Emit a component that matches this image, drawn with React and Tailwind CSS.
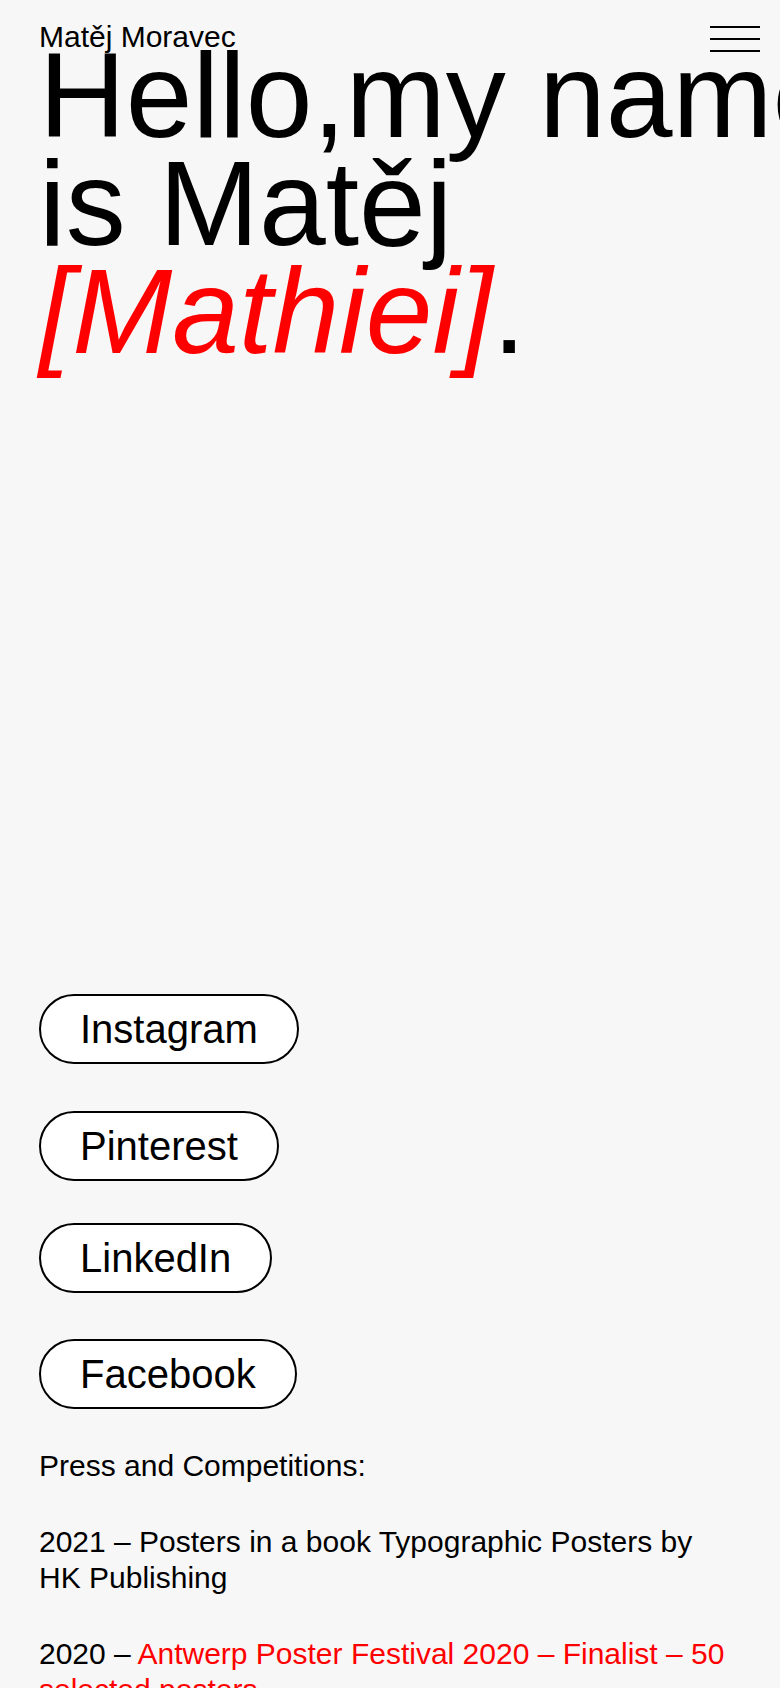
import React from 'react';

const links = [
  { label: 'Instagram', gap: 'mt-0' },
  { label: 'Pinterest', gap: 'mt-[47px]' },
  { label: 'LinkedIn', gap: 'mt-[42px]' },
  { label: 'Facebook', gap: 'mt-[46px]' },
];

const Header = () => (
  <header className="absolute top-0 left-0 right-0 z-10 flex justify-between items-start pl-[39px] pr-[20px] pt-[19px]">
    <a href="#" className="text-[30px] leading-[36px] text-black">
      Matěj Moravec
    </a>
    <button aria-label="Menu" className="mt-[7px] flex flex-col gap-[10px]">
      <span className="block w-[50px] h-[2px] bg-black" />
      <span className="block w-[50px] h-[2px] bg-black" />
      <span className="block w-[50px] h-[2px] bg-black" />
    </button>
  </header>
);

export default function App() {
  return (
    <div className="relative min-h-screen overflow-hidden bg-[#f7f7f7] text-black font-['Liberation_Sans',Arial,sans-serif]">
      <Header />

      <main className="px-[39px] pt-[41px] pb-[80px]">
        {/* Intro */}
        <h1 className="whitespace-nowrap text-[120px] leading-[108px] font-normal">
          Hello,my name
          <br />
          is Matěj
          <br />
          <span className="italic text-[#ff0000]">[Mathiei]</span>.
        </h1>

        {/* Socials */}
        <div className="mt-[629px] flex flex-col items-start">
          {links.map((link) => (
            <a
              key={link.label}
              href="#"
              className={`${link.gap} inline-flex h-[70px] items-center rounded-full border-2 border-black bg-white px-[39px] text-[40px] leading-none`}
            >
              {link.label}
            </a>
          ))}
        </div>

        {/* Press */}
        <div className="mt-[39px] flex flex-col gap-[40px] text-[30px] leading-[36px]">
          <p>Press and Competitions:</p>
          <p>2021 – Posters in a book Typographic Posters by HK Publishing</p>
          <p>
            2020 –{' '}
            <a href="#" className="text-[#ff0000]">
              Antwerp Poster Festival 2020 – Finalist – 50 selected posters
            </a>
          </p>
        </div>
      </main>
    </div>
  );
}
